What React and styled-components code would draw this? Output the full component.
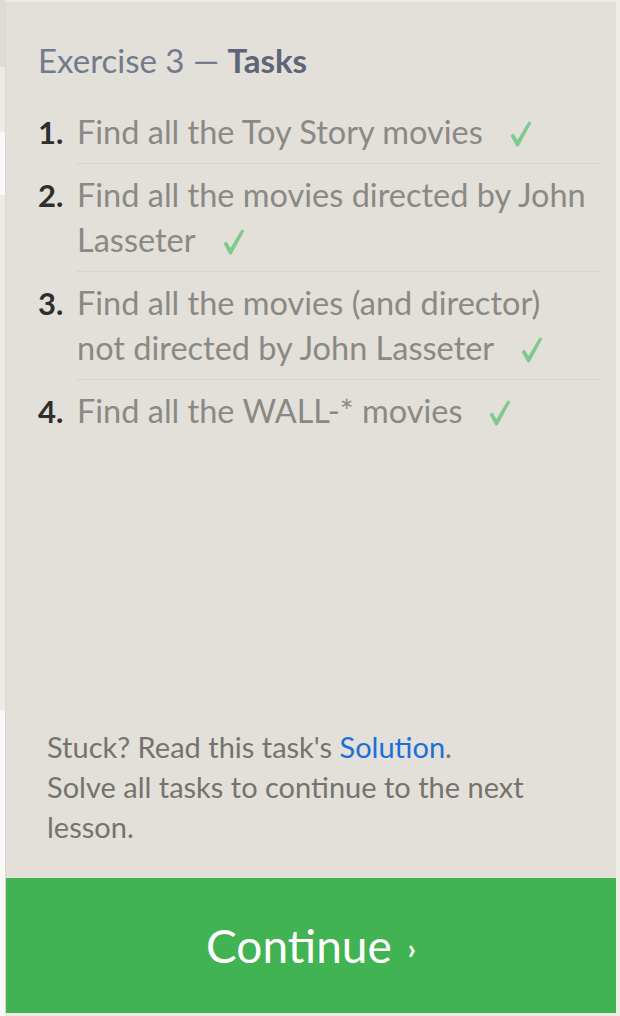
import React from "react";
import styled, { createGlobalStyle } from "styled-components";

const GlobalStyle = createGlobalStyle`
  html, body {
    margin: 0;
    padding: 0;
    background: #eeece6;
  }
  body {
    font-family: Lato, "Open Sans", sans-serif;
  }
`;

const tasks = [
  "Find all the Toy Story movies",
  "Find all the movies directed by John Lasseter",
  "Find all the movies (and director) not directed by John Lasseter",
  "Find all the WALL-* movies",
];

const Page = styled.div`
  display: flex;
  width: 620px;
  height: 1016px;
  overflow: hidden;
`;

const Gutter = styled.div`
  display: flex;
  flex-direction: column;
  width: 5px;
  flex: none;
`;

const Band = styled.div`
  height: ${(p) => (p.h ? `${p.h}px` : "auto")};
  flex: ${(p) => (p.h ? "none" : "1")};
  background: ${(p) => p.bg};
`;

const Panel = styled.div`
  display: flex;
  flex-direction: column;
  width: 611px;
  margin: 2px 0 3px;
  background: #e2e0d9;
  border-left: 1px solid #d9d7cf;
  border-top: 1px solid #dedcd4;
  box-sizing: border-box;
`;

const Content = styled.div`
  padding: 37px 16px 0 32px;
  flex: 1;
`;

const Title = styled.h2`
  margin: 0 0 21px;
  font-size: 33px;
  line-height: 40px;
  font-weight: 400;
  color: #717b8d;
`;

const Strong = styled.span`
  font-weight: 700;
  color: #5e6578;
`;

const List = styled.ol`
  list-style: none;
  margin: 0;
  padding: 0;
`;

const Item = styled.li`
  display: grid;
  grid-template-columns: 39px 1fr;
`;

const Num = styled.span`
  padding-top: 8px;
  font-size: 31px;
  line-height: 46px;
  font-weight: 700;
  color: #2e2e2e;
`;

const Text = styled.span`
  padding: 8px 6px 8px 0;
  font-size: 32.5px;
  line-height: 45.5px;
  color: #8a8984;
  border-bottom: ${(p) => (p.last ? "none" : "1px solid #d6d4c9")};
`;

const CheckMark = styled.svg`
  margin-left: 27px;
  vertical-align: -3px;
`;

const Check = () => (
  <CheckMark width="22" height="26" viewBox="0 0 22 26" aria-label="done">
    <path d="M0.5 14.5 L3.5 12.5 L7.5 19 L18.5 0.5 L21.5 1.5 L8.5 25.5 L6.5 25.5 Z" fill="#80c98e" />
  </CheckMark>
);

const Footer = styled.p`
  margin: 0 0 31px;
  padding: 0 40px 0 41px;
  font-size: 29px;
  line-height: 40px;
  color: #77726e;
`;

const Link = styled.a`
  color: #1b6fdb;
  text-decoration: none;
`;

const ContinueButton = styled.button`
  display: flex;
  align-items: center;
  justify-content: center;
  gap: 16px;
  height: 135px;
  width: 100%;
  border: none;
  background: #42b352;
  color: #ffffff;
  font-family: Lato, "Open Sans", sans-serif;
  font-size: 46px;
  cursor: pointer;
`;

const Chevron = styled.span`
  font-size: 28px;
  font-weight: 700;
  margin-top: 4px;
`;

export default function App() {
  return (
    <>
      <GlobalStyle />
      <Page>
        <Gutter>
          <Band h={67} bg="#dcdbd5" />
          <Band h={65} bg="#ecebe5" />
          <Band h={63} bg="#f8f8f8" />
          <Band h={515} bg="#ecebe5" />
          <Band bg="#f8f8f8" />
        </Gutter>
        <Panel>
          <Content>
            <Title>
              Exercise 3 — <Strong>Tasks</Strong>
            </Title>
            <List>
              {tasks.map((t, i) => (
                <Item key={i}>
                  <Num>{i + 1}.</Num>
                  <Text last={i === tasks.length - 1}>
                    {t}
                    <Check />
                  </Text>
                </Item>
              ))}
            </List>
          </Content>
          <Footer>
            Stuck? Read this task's <Link href="#">Solution</Link>.
            <br />
            Solve all tasks to continue to the next lesson.
          </Footer>
          <ContinueButton>
            Continue <Chevron>›</Chevron>
          </ContinueButton>
        </Panel>
      </Page>
    </>
  );
}
